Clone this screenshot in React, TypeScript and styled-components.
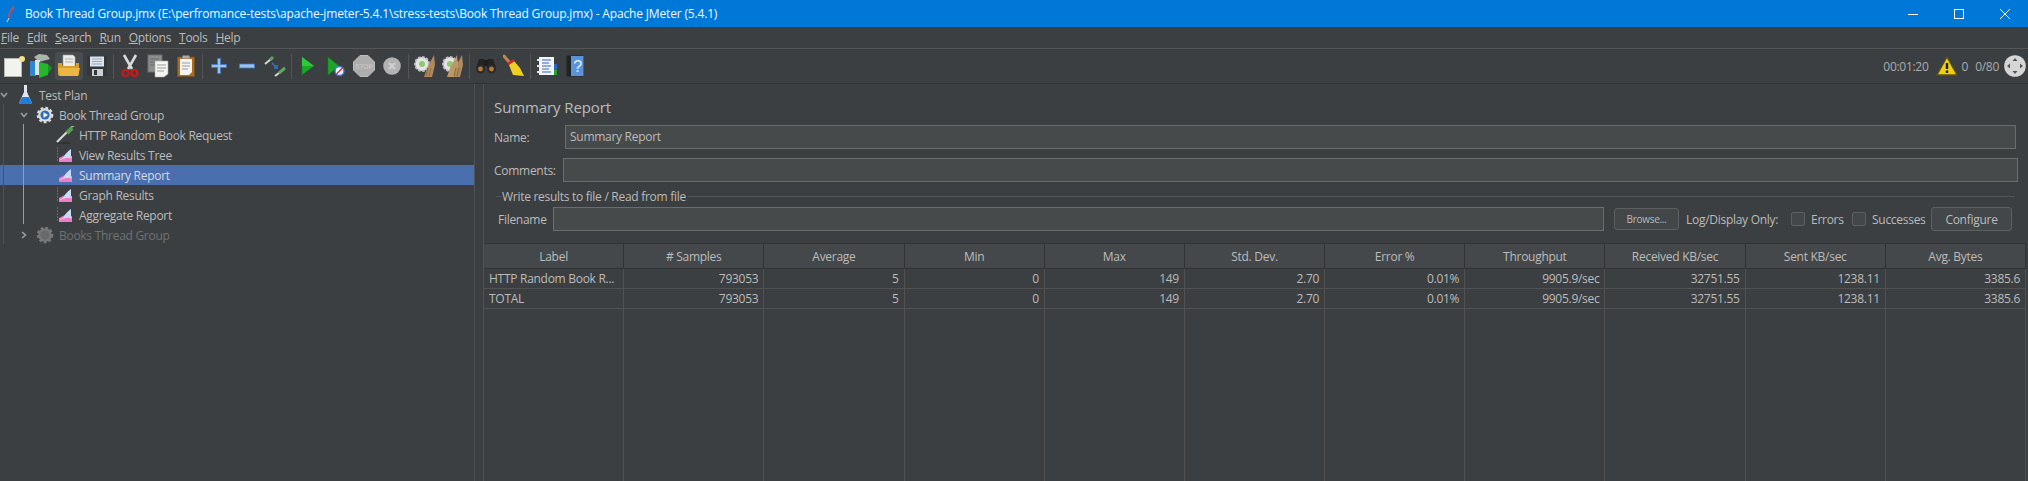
import React from 'react';
import styled, { createGlobalStyle } from 'styled-components';

const GlobalStyle = createGlobalStyle`
  html, body {
    margin: 0;
    padding: 0;
    background: #3c3f41;
  }
  * {
    box-sizing: border-box;
  }
`;

const Frame = styled.div`
  width: 2028px;
  height: 481px;
  overflow: hidden;
  display: flex;
  flex-direction: column;
  background: #3c3f41;
  color: #bbbbbb;
  font-family: "Open Sans", "Noto Sans", sans-serif;
  font-size: 12px;
  letter-spacing: -0.28px;
`;

const TitleBar = styled.div`
  height: 27px;
  flex: none;
  display: flex;
  align-items: center;
  background: #0078d7;
  color: #f2f8fd;
  padding-left: 6px;
  letter-spacing: -0.16px;
`;

const TitleText = styled.span`
  margin-left: 9px;
  flex: 1;
`;

const WindowButton = styled.div`
  width: 46px;
  height: 27px;
  display: flex;
  align-items: center;
  justify-content: center;
`;

const MenuBar = styled.div`
  height: 22px;
  flex: none;
  display: flex;
  align-items: center;
  gap: 8px;
  padding-left: 1px;
  border-bottom: 1px solid #555555;
`;

const Mnemonic = styled.span`
  text-decoration: underline;
`;

const Toolbar = styled.div`
  height: 35px;
  flex: none;
  display: flex;
  align-items: center;
  border-bottom: 1px solid #323232;
`;

const ToolButton = styled.div<{ $hover?: boolean; $first?: boolean }>`
  width: ${(p) => (p.$first ? 27 : 28)}px;
  height: 28px;
  flex: none;
  display: flex;
  align-items: center;
  justify-content: center;
  border-radius: 3px;
  background: ${(p) => (p.$hover ? '#4a4d4f' : 'transparent')};
`;

const ToolSeparator = styled.div`
  width: 1px;
  height: 25px;
  flex: none;
  margin: 0 2px;
  background: #555555;
`;

const StatusArea = styled.div`
  margin-left: auto;
  display: flex;
  align-items: center;
  padding-right: 2px;
`;

const StatusText = styled.span<{ $gap: number }>`
  margin-left: ${(p) => p.$gap}px;
  color: #a9acae;
`;

const StatusIcon = styled.div<{ $gap: number }>`
  margin-left: ${(p) => p.$gap}px;
  display: flex;
`;

const Main = styled.div`
  flex: 1;
  display: flex;
  min-height: 0;
`;

const TreePanel = styled.div`
  width: 475px;
  flex: none;
  position: relative;
  padding-top: 1px;
  border-right: 1px solid #505355;
`;

const TreeRow = styled.div<{ $depth: number; $selected?: boolean; $muted?: boolean }>`
  height: 20px;
  display: flex;
  align-items: center;
  padding-left: ${(p) => p.$depth * 20}px;
  background: ${(p) => (p.$selected ? '#4b6eaf' : 'transparent')};
  color: ${(p) => (p.$muted ? '#6f7173' : p.$selected ? '#d5dae3' : '#bbbbbb')};
`;

const ChevronSlot = styled.div`
  width: 15px;
  flex: none;
  display: flex;
  align-items: center;
`;

const NodeIcon = styled.div`
  width: 20px;
  flex: none;
  display: flex;
  align-items: center;
  justify-content: center;
  margin-right: 4px;
`;

const GuideLine = styled.div<{ $left: number; $top: number; $height: number; $color: string }>`
  position: absolute;
  left: ${(p) => p.$left}px;
  top: ${(p) => p.$top}px;
  width: 1px;
  height: ${(p) => p.$height}px;
  background: ${(p) => p.$color};
`;

const Divider = styled.div`
  width: 9px;
  flex: none;
  border-right: 1px solid #505355;
`;

const Editor = styled.div`
  flex: 1;
  min-width: 0;
  display: flex;
  flex-direction: column;
  padding: 0 2px 0 0;
`;

const Heading = styled.div`
  font-size: 15px;
  line-height: 20px;
  margin: 13px 0 8px 10px;
  letter-spacing: -0.1px;
`;

const FieldRow = styled.div<{ $mb: number; $pr: number }>`
  display: flex;
  align-items: center;
  padding: 0 ${(p) => p.$pr}px 0 10px;
  margin-bottom: ${(p) => p.$mb}px;
`;

const FieldLabel = styled.label<{ $width: number }>`
  width: ${(p) => p.$width}px;
  flex: none;
`;

const Field = styled.div`
  flex: 1;
  height: 24px;
  line-height: 22px;
  padding-left: 4px;
  background: #464a4b;
  border: 1px solid #6a6d6d;
`;

const GroupTitle = styled.div`
  display: flex;
  align-items: center;
  height: 16px;
  margin: 6px 11px 3px 12px;
  &::before {
    content: '';
    width: 5px;
    height: 1px;
    margin-right: 1px;
    background: #555555;
  }
  &::after {
    content: '';
    flex: 1;
    height: 1px;
    margin-left: 2px;
    background: #555555;
  }
`;

const FileRow = styled.div`
  display: flex;
  align-items: center;
  padding-left: 14px;
  margin-bottom: 12px;
`;

const FileField = styled(Field)`
  flex: none;
  width: 1051px;
`;

const Browse = styled.div`
  width: 65px;
  height: 22px;
  margin-left: 10px;
  display: flex;
  align-items: center;
  justify-content: center;
  font-size: 10px;
  letter-spacing: -0.3px;
  background: #43474a;
  border: 1px solid #5e6060;
  border-radius: 3px;
`;

const OnlyLabel = styled.span`
  margin-left: 7px;
  width: 105px;
`;

const CheckBox = styled.span`
  width: 14px;
  height: 14px;
  flex: none;
  background: #43474a;
  border: 1px solid #5e6060;
  border-radius: 2px;
`;

const CheckText = styled.span<{ $width: number }>`
  margin-left: 6px;
  width: ${(p) => p.$width}px;
`;

const Configure = styled.div`
  width: 81px;
  height: 24px;
  display: flex;
  align-items: center;
  justify-content: center;
  background: #43474a;
  border: 1px solid #5e6060;
  border-radius: 3px;
`;

const Grid = styled.div`
  flex: 1;
  min-height: 0;
  display: grid;
  grid-template-columns: repeat(11, 1fr);
  grid-template-rows: 25px 20px 20px 1fr;
  border-top: 1px solid #323232;
`;

const HeadCell = styled.div`
  display: flex;
  align-items: center;
  justify-content: center;
  background: #45484a;
  border-right: 1px solid #323232;
  border-bottom: 1px solid #323232;
`;

const Cell = styled.div<{ $left?: boolean }>`
  display: flex;
  align-items: center;
  justify-content: ${(p) => (p.$left ? 'flex-start' : 'flex-end')};
  padding: 0 5px;
  border-right: 1px solid #515151;
  border-bottom: 1px solid #515151;
  white-space: nowrap;
`;

const FillerCell = styled.div`
  border-right: 1px solid #515151;
`;

const Feather = () => (
  <svg width="10" height="18" viewBox="0 0 10 18">
    <path d="M8 0 C9 5 6 10 3 13 L2 11 C3 7 5 3 8 0Z" fill="#d8483a" />
    <path d="M4 8 L7 4 L8 6 L4 12Z" fill="#3a62c4" />
    <path d="M3 13 L1 17" stroke="#e9dccc" strokeWidth="1" />
  </svg>
);

const NewDoc = () => (
  <svg width="24" height="24" viewBox="0 0 24 24">
    <rect x="2.5" y="4.5" width="17" height="18" fill="#f2f2ee" stroke="#b5b5b0" />
    <circle cx="20" cy="5" r="3" fill="#f5e27a" />
  </svg>
);

const Templates = () => (
  <svg width="24" height="26" viewBox="0 0 24 26">
    <path d="M5 4 L10 1 L18 2 L21 6 L10 9Z" fill="#aab6ad" />
    <rect x="1" y="8" width="6" height="15" fill="#2d86d0" />
    <rect x="6" y="7" width="5" height="15" fill="#d8e4e4" />
    <path d="M10 9 L19 11 L19 22 L10 25Z" fill="#27b52b" />
    <path d="M19 11 L23 15 L19 21Z" fill="#1a9120" />
  </svg>
);

const OpenFolder = () => (
  <svg width="24" height="24" viewBox="0 0 24 24">
    <path d="M6 1 H16 L18 3 V13 H6Z" fill="#ececea" stroke="#a9a9a7" strokeWidth="0.6" />
    <path d="M8 5 H16 M8 8 H16" stroke="#b3b3b0" />
    <path d="M1 9 H5 V12 H19 V9 H22 V20 Q22 22 20 22 H3 Q1 22 1 20Z" fill="#d89f2d" />
    <path d="M1 14 H23 L21 22 H3Z" fill="#ecb645" />
  </svg>
);

const SaveDisk = () => (
  <svg width="22" height="22" viewBox="0 0 22 22">
    <rect x="1" y="1" width="20" height="20" rx="1.5" fill="#34363a" />
    <rect x="4" y="1.5" width="14" height="10" fill="#dce4f0" />
    <path d="M6 4 H16 M6 6.5 H16 M6 9 H16" stroke="#8fa9cf" />
    <rect x="6" y="14" width="11" height="7" fill="#cdd0d2" />
    <rect x="8" y="15" width="3" height="5" fill="#33363a" />
  </svg>
);

const Scissors = () => (
  <svg width="18" height="24" viewBox="0 0 18 24">
    <path d="M3 1 L11 15 M15 1 L7 15" stroke="#d9d9d9" strokeWidth="2.6" />
    <circle cx="4.5" cy="19" r="3" fill="none" stroke="#d0161a" strokeWidth="2.2" />
    <circle cx="13.5" cy="19" r="3" fill="none" stroke="#d0161a" strokeWidth="2.2" />
  </svg>
);

const CopyDocs = () => (
  <svg width="22" height="24" viewBox="0 0 22 24">
    <rect x="1" y="1" width="14" height="17" fill="#8b8d8e" stroke="#6d6f70" />
    <path d="M3 5 H12 M3 8 H12 M3 11 H12" stroke="#6a6c6d" />
    <path d="M8 7 H21 V20 L17 23 H8Z" fill="#f4f4f2" stroke="#a9a9a7" strokeWidth="0.6" />
    <path d="M10 11 H19 M10 14 H19 M10 17 H17" stroke="#9b9b99" />
  </svg>
);

const Clipboard = () => (
  <svg width="18" height="22" viewBox="0 0 18 22">
    <rect x="0.5" y="2" width="17" height="19.5" fill="#a86d22" stroke="#7d4f15" strokeWidth="0.6" />
    <path d="M3 4 H15 V17 L12 20 H3Z" fill="#f3f3f0" />
    <path d="M5 8 H13 M5 11 H13 M5 14 H11" stroke="#9b9b99" />
    <rect x="5.5" y="0.5" width="7" height="3" fill="#a8aaab" />
  </svg>
);

const PlusIcon = () => (
  <svg width="16" height="16" viewBox="0 0 16 16">
    <path d="M0.5 6.5 H6.5 V0.5 H9.5 V6.5 H15.5 V9.5 H9.5 V15.5 H6.5 V9.5 H0.5Z" fill="#9dc1ef" stroke="#3e77c4" strokeWidth="0.8" />
  </svg>
);

const MinusIcon = () => (
  <svg width="16" height="6" viewBox="0 0 16 6">
    <rect x="0.5" y="1" width="15" height="4" fill="#9dc1ef" stroke="#3e77c4" strokeWidth="0.8" />
  </svg>
);

const ToggleIcon = () => (
  <svg width="22" height="22" viewBox="0 0 22 22">
    <path d="M1 9 L7 4" stroke="#d6d6d6" strokeWidth="2" />
    <path d="M6 5 L9 2" stroke="#5da65d" strokeWidth="3" />
    <path d="M21 13 L15 18" stroke="#5da65d" strokeWidth="3" />
    <path d="M15 18 L11 21" stroke="#d6d6d6" strokeWidth="2" />
    <path d="M8 8 L13 13 M13 10 V13 H10" stroke="#2f78d6" strokeWidth="1.3" fill="none" />
  </svg>
);

const PlayIcon = () => (
  <svg width="14" height="20" viewBox="0 0 14 20">
    <path d="M1 1 L13 10 L1 19Z" fill="#1ca529" stroke="#0e7d1a" strokeWidth="0.6" />
    <path d="M1 1 L13 10 L1 10Z" fill="#2fc83d" />
  </svg>
);

const PlayNoPause = () => (
  <svg width="18" height="21" viewBox="0 0 18 21">
    <path d="M1 1 L12 10 L1 19Z" fill="#1ca529" stroke="#0e7d1a" strokeWidth="0.6" />
    <circle cx="12.5" cy="15" r="4.5" fill="#f0f4fa" stroke="#3b78d6" strokeWidth="1.4" />
    <path d="M9.5 18 L15.5 12" stroke="#d0312d" strokeWidth="1.4" />
  </svg>
);

const StopIcon = () => (
  <svg width="22" height="22" viewBox="0 0 22 22">
    <path d="M7 0.5 H15 L21.5 7 V15 L15 21.5 H7 L0.5 15 V7Z" fill="#adadad" stroke="#bcbcbc" />
    <text x="11" y="14" fontSize="7" fontWeight="700" textAnchor="middle" fill="#c2c2c2" fontFamily="Liberation Sans, sans-serif">STOP</text>
  </svg>
);

const ShutdownIcon = () => (
  <svg width="18" height="18" viewBox="0 0 18 18">
    <circle cx="9" cy="9" r="8.8" fill="#b2b2b2" />
    <path d="M6 6 L12 12 M12 6 L6 12" stroke="#cecece" strokeWidth="2.4" />
  </svg>
);

const GearBroom = ({ double }: { double?: boolean }) => (
  <svg width="24" height="24" viewBox="0 0 24 24">
    <circle cx="9" cy="10" r="7" fill="#e4e4e4" stroke="#bfbfbf" strokeWidth="2" strokeDasharray="2.5 1.6" />
    <circle cx="9" cy="10" r="3" fill="#8dc96d" />
    <path d="M21 1 L14 14 L11 23 L19 23 L22 11Z" fill="#b08a5c" />
    {double && <path d="M16 1 L9 14 L6 23 L13 23 L17 11Z" fill="#bc9768" />}
    <path d="M15 14 L13 22 M18 14 L16 22" stroke="#8a6a42" />
  </svg>
);

const Binoculars = () => (
  <svg width="22" height="16" viewBox="0 0 22 16">
    <rect x="7" y="2" width="8" height="6" fill="#1c1c1c" />
    <path d="M4 1 H9 L10 10 H1Z" fill="#232323" />
    <path d="M13 1 H18 L21 10 H12Z" fill="#232323" />
    <circle cx="5.5" cy="11" r="4.5" fill="#2a2a2a" />
    <circle cx="16.5" cy="11" r="4.5" fill="#2a2a2a" />
    <circle cx="5.5" cy="11" r="2.4" fill="#b87a3a" />
    <circle cx="16.5" cy="11" r="2.4" fill="#b87a3a" />
  </svg>
);

const BroomIcon = () => (
  <svg width="22" height="24" viewBox="0 0 22 24">
    <path d="M1 2 L7 9" stroke="#b98a4a" strokeWidth="3" strokeLinecap="round" />
    <path d="M6 11 L11 7 L17 14 L21 22 L10 21Z" fill="#f0cf25" />
    <path d="M5 10 L11 6" stroke="#d2232a" strokeWidth="2.6" />
    <path d="M11 21 L13 24 H21" stroke="#2b2b2b" strokeWidth="1" fill="none" opacity="0.5" />
  </svg>
);

const LogIcon = () => (
  <svg width="22" height="20" viewBox="0 0 22 20">
    <rect x="3" y="1" width="15" height="18" fill="#f4f4f4" />
    <path d="M6 4 H15 M6 7 H13 M6 10 H15 M6 13 H13 M6 16 H15" stroke="#2c66c4" strokeWidth="1" />
    <path d="M1 4 H4 M1 10 H4 M1 16 H4" stroke="#e4e4e4" strokeWidth="2" />
    <rect x="18" y="8" width="3" height="6" fill="#2c66c4" />
    <rect x="18" y="14" width="3" height="5" fill="#26a030" />
  </svg>
);

const HelpBook = () => (
  <svg width="18" height="22" viewBox="0 0 18 22">
    <rect x="0.5" y="0.5" width="17" height="21" rx="1" fill="#1f2326" />
    <rect x="5" y="1" width="12.5" height="20" fill="#5a93d8" />
    <text x="11.5" y="17" fontSize="16" textAnchor="middle" fill="#e8f0fa" fontFamily="Liberation Sans, sans-serif">?</text>
  </svg>
);

const WarningIcon = () => (
  <svg width="22" height="20" viewBox="0 0 22 20">
    <path d="M11 1 L21 19 H1Z" fill="#f1cf0d" stroke="#5e5212" strokeWidth="1.3" strokeLinejoin="round" />
    <path d="M11 7 V13" stroke="#1c1c1c" strokeWidth="2.4" />
    <rect x="9.8" y="14.5" width="2.4" height="2.4" fill="#1c1c1c" />
  </svg>
);

const GlobeIcon = () => (
  <svg width="22" height="22" viewBox="0 0 22 22">
    <circle cx="11" cy="11" r="10.8" fill="#d6d6d6" />
    <path d="M11 3 L13.5 6 H8.5Z M11 19 L13.5 16 H8.5Z M3 11 L6 8.5 V13.5Z M19 11 L16 8.5 V13.5Z" fill="#555555" />
  </svg>
);

const Flask = () => (
  <svg width="13" height="20" viewBox="0 0 13 20">
    <path d="M5 0 H8 V7 L12.5 17 Q13 19 11 19 H2 Q0 19 0.5 17 L5 7Z" fill="#dfe6ee" />
    <path d="M3 12 H10 L12.5 17 Q13 19 11 19 H2 Q0 19 0.5 17Z" fill="#1f7fd8" />
  </svg>
);

const GearPlay = ({ muted }: { muted?: boolean }) => (
  <svg width="18" height="18" viewBox="0 0 18 18">
    <circle cx="9" cy="9" r="6.8" fill={muted ? '#77797a' : '#e0e0e0'} stroke={muted ? '#77797a' : '#dcdcdc'} strokeWidth="3" strokeDasharray="2.6 2" />
    <circle cx="9" cy="9" r="4.6" fill={muted ? '#68696b' : '#2f6dbb'} />
    {!muted && <path d="M7.5 6.2 L12 9 L7.5 11.8Z" fill="#f2f6fb" />}
  </svg>
);

const Sampler = () => (
  <svg width="19" height="18" viewBox="0 0 19 18">
    <path d="M1 17 H14" stroke="#2a2a2a" strokeWidth="1.2" />
    <path d="M1 16 L11 6" stroke="#d8d8d8" strokeWidth="2.2" />
    <path d="M11 7 L16 2" stroke="#56a04c" strokeWidth="4" />
    <path d="M15 1 L18 0" stroke="#8fc47f" strokeWidth="1.5" />
  </svg>
);

const Listener = () => (
  <svg width="16" height="16" viewBox="0 0 16 16">
    <path d="M0.5 0 V15" stroke="#686868" strokeWidth="1" strokeDasharray="2 1" />
    <path d="M2 15 V11 L8 8 L15 9 V15Z" fill="#ee7cc6" />
    <path d="M3 13 L8 10 L15 11" stroke="#f7c3e4" strokeWidth="0.8" fill="none" />
    <path d="M6 12 Q8 6 14 2 V11 Q10 10 6 12Z" fill="#c9dcf6" />
  </svg>
);

const Chevron = ({ open }: { open: boolean }) => (
  <svg width="8" height="8" viewBox="0 0 8 8">
    <path d={open ? 'M1 2 L4 5.5 L7 2' : 'M2 1 L5.5 4 L2 7'} fill="none" stroke="#9a9c9e" strokeWidth="1.6" />
  </svg>
);

type Tool = { key: string; icon?: React.ReactNode; hover?: boolean };

const tools: Tool[] = [
  { key: 'new', icon: <NewDoc /> },
  { key: 'templates', icon: <Templates /> },
  { key: 'open', icon: <OpenFolder />, hover: true },
  { key: 'save', icon: <SaveDisk /> },
  { key: 's1' },
  { key: 'cut', icon: <Scissors /> },
  { key: 'copy', icon: <CopyDocs /> },
  { key: 'paste', icon: <Clipboard /> },
  { key: 's2' },
  { key: 'expand', icon: <PlusIcon /> },
  { key: 'collapse', icon: <MinusIcon /> },
  { key: 'toggle', icon: <ToggleIcon /> },
  { key: 's3' },
  { key: 'start', icon: <PlayIcon /> },
  { key: 'startNoPause', icon: <PlayNoPause /> },
  { key: 'stop', icon: <StopIcon /> },
  { key: 'shutdown', icon: <ShutdownIcon /> },
  { key: 's4' },
  { key: 'clear', icon: <GearBroom /> },
  { key: 'clearAll', icon: <GearBroom double /> },
  { key: 's5' },
  { key: 'search', icon: <Binoculars /> },
  { key: 'reset', icon: <BroomIcon /> },
  { key: 's6' },
  { key: 'functions', icon: <LogIcon /> },
  { key: 'help', icon: <HelpBook /> },
];

const menus = ['File', 'Edit', 'Search', 'Run', 'Options', 'Tools', 'Help'];

const treeNodes = [
  { label: 'Test Plan', depth: 0, chevron: true, icon: <Flask /> },
  { label: 'Book Thread Group', depth: 1, chevron: true, icon: <GearPlay /> },
  { label: 'HTTP Random Book Request', depth: 2, icon: <Sampler /> },
  { label: 'View Results Tree', depth: 2, icon: <Listener /> },
  { label: 'Summary Report', depth: 2, icon: <Listener />, selected: true },
  { label: 'Graph Results', depth: 2, icon: <Listener /> },
  { label: 'Aggregate Report', depth: 2, icon: <Listener /> },
  { label: 'Books Thread Group', depth: 1, collapsed: true, muted: true, icon: <GearPlay muted /> },
];

const columns = ['Label', '# Samples', 'Average', 'Min', 'Max', 'Std. Dev.', 'Error %', 'Throughput', 'Received KB/sec', 'Sent KB/sec', 'Avg. Bytes'];
const stats = ['793053', '5', '0', '149', '2.70', '0.01%', '9905.9/sec', '32751.55', '1238.11', '3385.6'];
const rows = ['HTTP Random Book R...', 'TOTAL'];

const App: React.FC = () => {
  return (
    <Frame>
      <GlobalStyle />
      <TitleBar>
        <Feather />
        <TitleText>Book Thread Group.jmx (E:\perfromance-tests\apache-jmeter-5.4.1\stress-tests\Book Thread Group.jmx) - Apache JMeter (5.4.1)</TitleText>
        <WindowButton>
          <svg width="10" height="10" viewBox="0 0 10 10"><path d="M0 5.5 H10" stroke="#fff" /></svg>
        </WindowButton>
        <WindowButton>
          <svg width="10" height="10" viewBox="0 0 10 10"><rect x="0.5" y="0.5" width="9" height="9" fill="none" stroke="#fff" /></svg>
        </WindowButton>
        <WindowButton>
          <svg width="10" height="10" viewBox="0 0 10 10"><path d="M0 0 L10 10 M10 0 L0 10" stroke="#fff" /></svg>
        </WindowButton>
      </TitleBar>

      <MenuBar>
        {menus.map((m) => (
          <span key={m}>
            <Mnemonic>{m[0]}</Mnemonic>
            {m.slice(1)}
          </span>
        ))}
      </MenuBar>

      <Toolbar>
        {tools.map((t, i) =>
          t.icon ? (
            <ToolButton key={t.key} $hover={t.hover} $first={i === 0}>
              {t.icon}
            </ToolButton>
          ) : (
            <ToolSeparator key={t.key} />
          )
        )}
        <StatusArea>
          <StatusText $gap={0}>00:01:20</StatusText>
          <StatusIcon $gap={7}><WarningIcon /></StatusIcon>
          <StatusText $gap={4}>0</StatusText>
          <StatusText $gap={7}>0/80</StatusText>
          <StatusIcon $gap={5}><GlobeIcon /></StatusIcon>
        </StatusArea>
      </Toolbar>

      <Main>
        <TreePanel>
          <GuideLine $left={3} $top={20} $height={140} $color="#515151" />
          <GuideLine $left={23} $top={40} $height={100} $color="#6fa8dc" />
          {treeNodes.map((n) => (
            <TreeRow key={n.label} $depth={n.depth} $selected={n.selected} $muted={n.muted}>
              <ChevronSlot>
                {(n.chevron || n.collapsed) && <Chevron open={!n.collapsed} />}
              </ChevronSlot>
              <NodeIcon>{n.icon}</NodeIcon>
              {n.label}
            </TreeRow>
          ))}
        </TreePanel>
        <Divider />
        <Editor>
          <Heading>Summary Report</Heading>
          <FieldRow $mb={9} $pr={10}>
            <FieldLabel $width={71}>Name:</FieldLabel>
            <Field>Summary Report</Field>
          </FieldRow>
          <FieldRow $mb={0} $pr={8}>
            <FieldLabel $width={69}>Comments:</FieldLabel>
            <Field />
          </FieldRow>
          <GroupTitle>Write results to file / Read from file</GroupTitle>
          <FileRow>
            <FieldLabel $width={55}>Filename</FieldLabel>
            <FileField />
            <Browse>Browse...</Browse>
            <OnlyLabel>Log/Display Only:</OnlyLabel>
            <CheckBox />
            <CheckText $width={41}>Errors</CheckText>
            <CheckBox />
            <CheckText $width={59}>Successes</CheckText>
            <Configure>Configure</Configure>
          </FileRow>
          <Grid>
            {columns.map((c) => (
              <HeadCell key={c}>{c}</HeadCell>
            ))}
            {rows.map((r) => (
              <React.Fragment key={r}>
                <Cell $left>{r}</Cell>
                {stats.map((s, i) => (
                  <Cell key={i}>{s}</Cell>
                ))}
              </React.Fragment>
            ))}
            {columns.map((c) => (
              <FillerCell key={c} />
            ))}
          </Grid>
        </Editor>
      </Main>
    </Frame>
  );
};

export default App;
